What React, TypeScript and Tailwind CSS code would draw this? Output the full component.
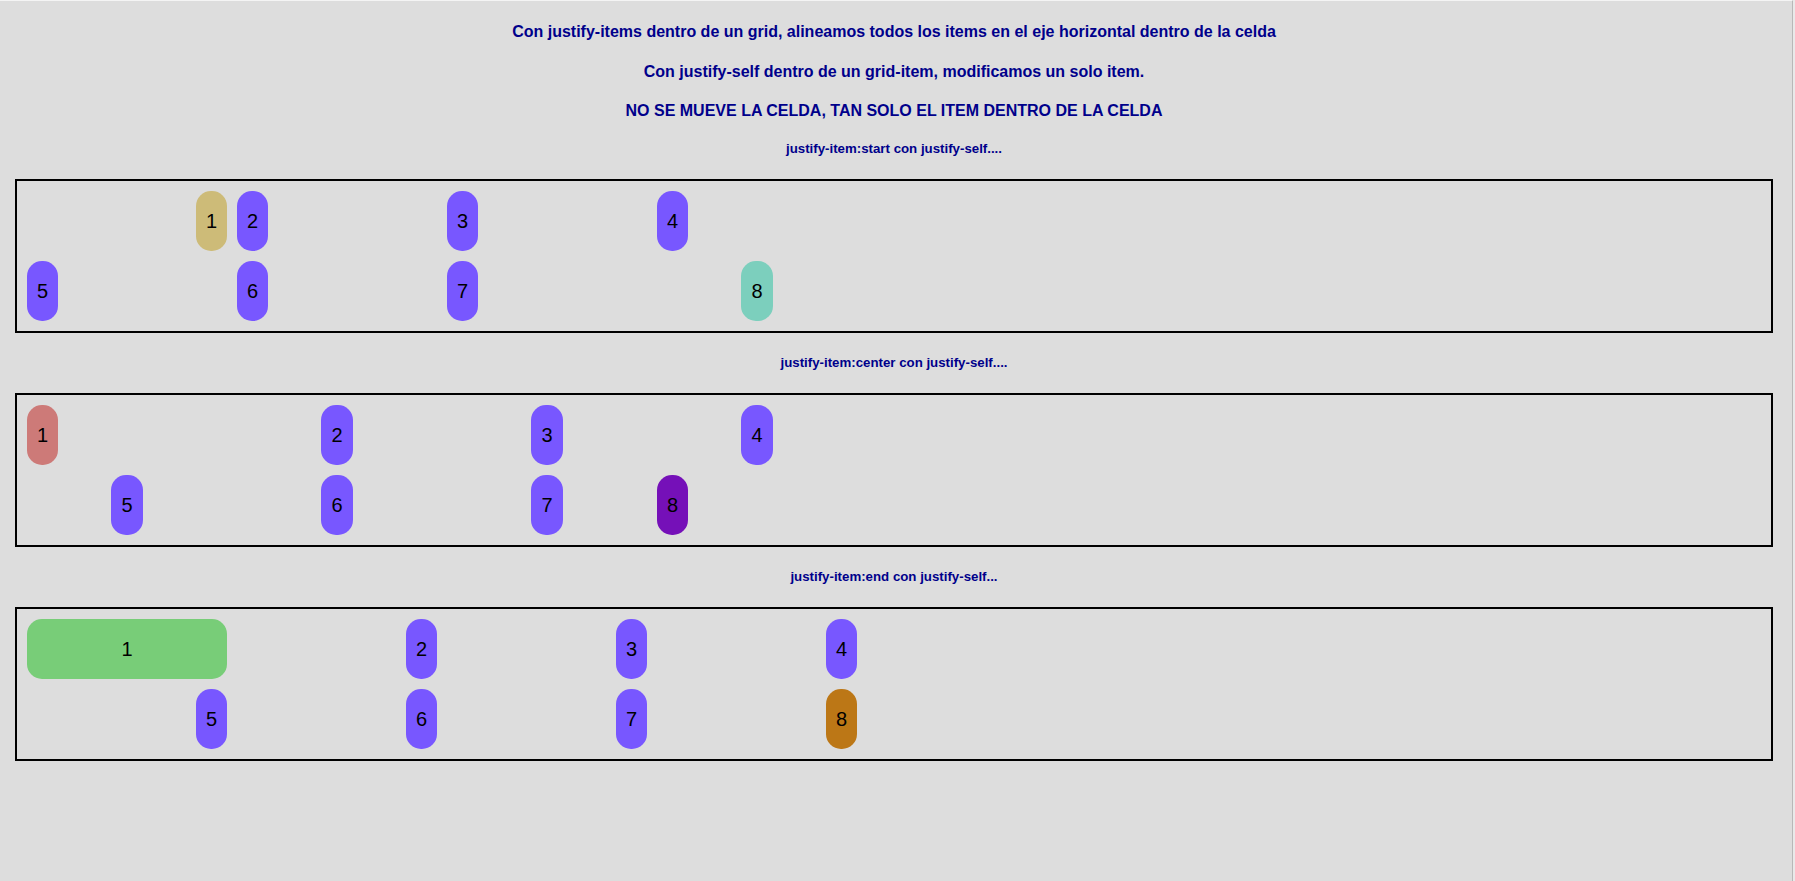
import React from 'react';

type Self = 'start' | 'center' | 'end' | 'stretch' | undefined;

interface Item {
  n: number;
  self?: Self;
  color?: string;
}

interface GridDemo {
  label: string;
  items: 'start' | 'center' | 'end';
  list: Item[];
}

const selfClass: Record<string, string> = {
  start: 'justify-self-start',
  center: 'justify-self-center',
  end: 'justify-self-end',
  stretch: 'justify-self-stretch',
};

const itemsClass: Record<string, string> = {
  start: 'justify-items-start',
  center: 'justify-items-center',
  end: 'justify-items-end',
};

const demos: GridDemo[] = [
  {
    label: 'justify-item:start con justify-self....',
    items: 'start',
    list: [
      { n: 1, self: 'end', color: 'bg-[#cdbb78]' },
      { n: 2 },
      { n: 3 },
      { n: 4 },
      { n: 5 },
      { n: 6 },
      { n: 7 },
      { n: 8, self: 'center', color: 'bg-[#7ccfbd]' },
    ],
  },
  {
    label: 'justify-item:center con justify-self....',
    items: 'center',
    list: [
      { n: 1, self: 'start', color: 'bg-[#cd7a78]' },
      { n: 2 },
      { n: 3 },
      { n: 4 },
      { n: 5 },
      { n: 6 },
      { n: 7 },
      { n: 8, self: 'start', color: 'bg-[#7510b8]' },
    ],
  },
  {
    label: 'justify-item:end con justify-self...',
    items: 'end',
    list: [
      { n: 1, self: 'stretch', color: 'bg-[#78cd78]' },
      { n: 2 },
      { n: 3 },
      { n: 4 },
      { n: 5 },
      { n: 6 },
      { n: 7 },
      { n: 8, self: 'end', color: 'bg-[#bc7716]' },
    ],
  },
];

const Cell: React.FC<{ item: Item }> = ({ item }) => (
  <div
    className={`h-[60px] px-[10px] rounded-[15px] flex items-center justify-center text-[20px] text-black ${
      item.color ?? 'bg-[#7857ff]'
    } ${item.self ? selfClass[item.self] : ''}`}
  >
    {item.n}
  </div>
);

export default function App() {
  return (
    <div className="min-h-[881px] w-full flex bg-[#e9e9e9] font-['Liberation_Sans',Arial,sans-serif]">
      <div className="w-[1793px] shrink-0 bg-[#dddddd] border-t border-t-[#f4f4f4] border-r border-r-[#b8b8b8]">
        <div className="w-[1788px] px-[15px] pt-[21.5px] pb-10">
          <div className="flex flex-col items-center text-[#00008b] font-bold">
            <h4 className="text-[16px] leading-[18.4px]">
              Con justify-items dentro de un grid, alineamos todos los items en el eje horizontal dentro de la celda
            </h4>
            <h4 className="mt-[22.3px] text-[16px] leading-[18.4px]">
              Con justify-self dentro de un grid-item, modificamos un solo item.
            </h4>
            <h4 className="mt-[20.8px] text-[16px] leading-[18.4px]">
              NO SE MUEVE LA CELDA, TAN SOLO EL ITEM DENTRO DE LA CELDA
            </h4>
          </div>

          {demos.map((demo, i) => (
            <section key={demo.label}>
              <h5
                className={`${i === 0 ? 'mt-[20.64px]' : 'mt-[22.18px]'} mb-[22.18px] text-center text-[13.28px] leading-[15.5px] font-bold text-[#00008b]`}
              >
                {demo.label}
              </h5>
              <div
                className={`grid grid-cols-[repeat(4,200px)] grid-rows-[60px_60px] gap-[10px] p-[10px] border-2 border-black ${itemsClass[demo.items]}`}
              >
                {demo.list.map((item) => (
                  <Cell key={item.n} item={item} />
                ))}
              </div>
            </section>
          ))}
        </div>
      </div>
    </div>
  );
}
